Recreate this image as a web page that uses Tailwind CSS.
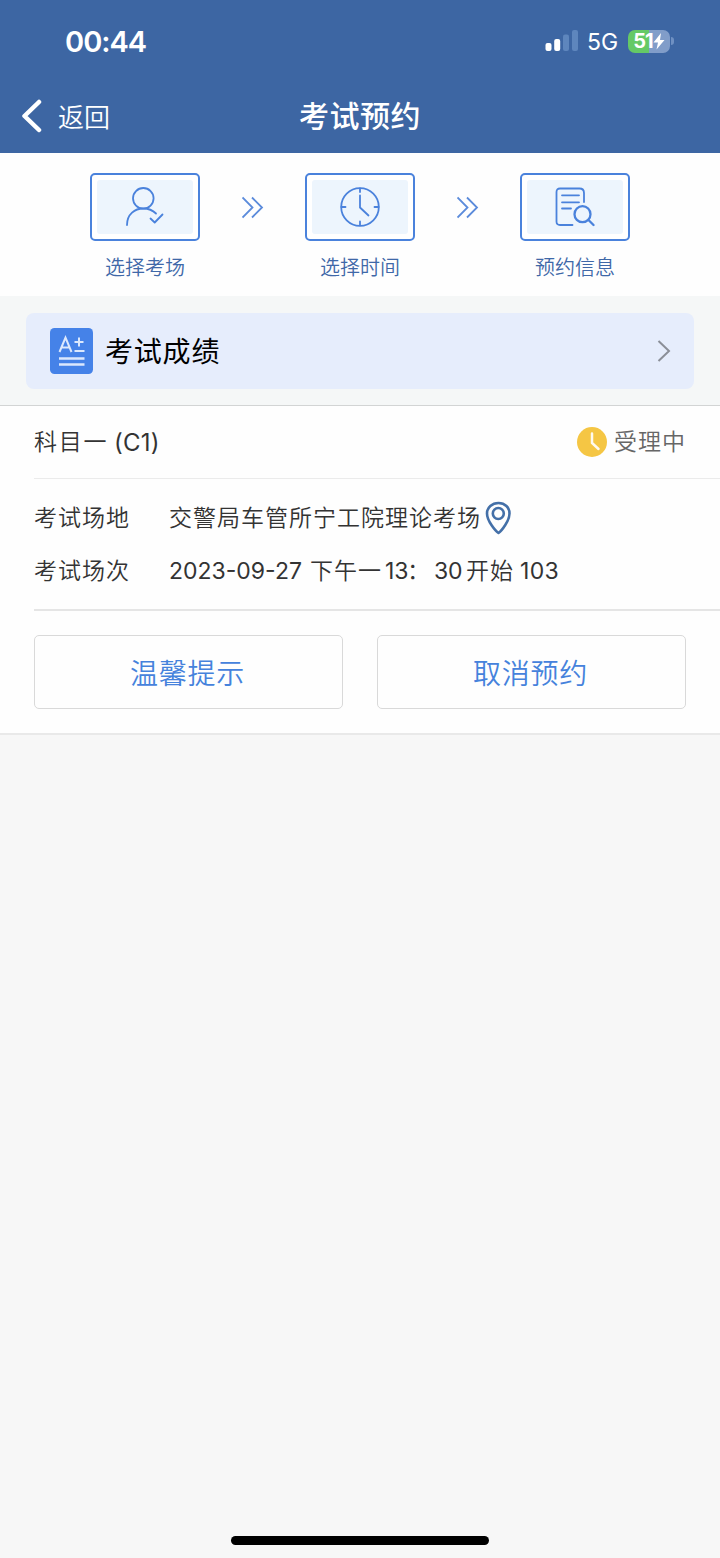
<!DOCTYPE html>
<html lang="zh-CN">

<head>
    <meta charset="UTF-8">
    <meta name="viewport" content="width=device-width, initial-scale=1.0">
    <script src="https://cdn.jsdelivr.net/npm/@tailwindcss/browser@4"></script>
    <title>考试预约</title>
</head>

<body class="bg-[#f7f7f7]">
    <div class="flex flex-col w-[720px] h-[1558px] overflow-hidden bg-[#f7f7f7] text-[#333] font-[350] font-['Inter','Noto_Sans_CJK_SC',sans-serif]">

        <!-- Header -->
        <header class="h-[153px] shrink-0 bg-[#3d66a3] text-white">
            <div class="flex items-center justify-between h-[82px] pl-[65px] pr-[46px]">
                <div class="text-[29px] leading-none font-semibold tracking-[-1px]">00:44</div>
                <div class="flex items-center">
                    <svg class="w-[34px] h-[22px]" viewBox="0 0 34 22">
                        <rect x="0.5" y="13" width="6" height="8" rx="2" fill="#fff" />
                        <rect x="9.2" y="9" width="6" height="12" rx="2" fill="#fff" />
                        <rect x="18" y="4.500" width="6" height="16.500" rx="2" fill="#5e86bd" />
                        <rect x="27" y="0" width="6" height="21" rx="2" fill="#5e86bd" />
                    </svg>
                    <div class="ml-[8px] w-[41px] pt-[2px] text-[23px] leading-none font-normal">5G</div>
                    <div class="flex items-center justify-center w-[42px] h-[23px] rounded-[7px] bg-linear-to-r from-[#65c966] from-51% to-[#819dc9] to-51%">
                        <span class="text-[20px] leading-none font-bold tracking-[-1px]">51</span>
                        <svg class="w-[12px] h-[17px]" viewBox="0 0 12 17">
                            <path d="M8 0 L0.500 9.500 H5 L3.500 16.500 L11.500 7 H7 Z" fill="#fff" />
                        </svg>
                    </div>
                    <div class="ml-[1px] w-[3px] h-[8px] rounded-r-full bg-[#6f90c2]"></div>
                </div>
            </div>
            <div class="grid grid-cols-3 items-center h-[68px]">
                <div class="flex items-center pl-[21px]">
                    <svg class="w-[22px] h-[34px]" viewBox="0 0 22 34" fill="none" stroke="#fff" stroke-width="4.500" stroke-linecap="round" stroke-linejoin="round">
                        <path d="M18 3 L3.500 17 L18 31" />
                    </svg>
                    <span class="ml-[15px] pt-[3px] text-[26px] leading-none">返回</span>
                </div>
                <h1 class="text-center text-[30px] leading-none font-medium tracking-[0.500px]">考试预约</h1>
            </div>
        </header>

        <!-- Steps -->
        <section class="flex justify-between h-[143px] shrink-0 pt-[20px] px-[90px] bg-[#fefefe] text-[#3f68a8]">
            <div class="flex flex-col items-center w-[110px]">
                <div class="w-full h-[68px] p-[5px] border-2 border-[#4a82dc] rounded-[5px] bg-white">
                    <div class="flex items-center justify-center h-full rounded-[3px] bg-[#edf5fd]">
                        <svg class="w-[40px] h-[40px]" viewBox="0 0 40 40" fill="none" stroke="#4a82dc" stroke-width="1.8" stroke-linecap="round" stroke-linejoin="round">
                            <circle cx="18.300" cy="11.300" r="10.300" />
                            <path d="M2 38 C2 27 10 21.500 18.300 21.500 C24 21.500 28 23.500 31 26.500" />
                            <path d="M25.500 31.500 L29.700 35.500 L37.500 27.500" />
                        </svg>
                    </div>
                </div>
                <div class="mt-[16px] text-[20px] leading-[22px] whitespace-nowrap">选择考场</div>
            </div>
            <svg class="mt-[23px] w-[22px] h-[23px]" viewBox="0 0 22 23" fill="none" stroke="#5b8bdb" stroke-width="1.8">
                <path d="M0.500 1.500 L10.500 11.500 L0.500 21.500 M10 1.500 L20 11.500 L10 21.500" />
            </svg>
            <div class="flex flex-col items-center w-[110px]">
                <div class="w-full h-[68px] p-[5px] border-2 border-[#4a82dc] rounded-[5px] bg-white">
                    <div class="flex items-center justify-center h-full rounded-[3px] bg-[#edf5fd]">
                        <svg class="w-[40px] h-[40px]" viewBox="0 0 40 40" fill="none" stroke="#4a82dc" stroke-width="1.800" stroke-linecap="round">
                            <circle cx="20" cy="20" r="18.800" />
                            <path d="M20 8.500 V20.500 L28.500 28.500" />
                            <path d="M20 1.500 V5 M20 34.500 V38 M1.500 20 H5.500 M34.500 20 H38.500" />
                        </svg>
                    </div>
                </div>
                <div class="mt-[16px] text-[20px] leading-[22px] whitespace-nowrap">选择时间</div>
            </div>
            <svg class="mt-[23px] w-[22px] h-[23px]" viewBox="0 0 22 23" fill="none" stroke="#5b8bdb" stroke-width="1.8">
                <path d="M0.500 1.500 L10.500 11.500 L0.500 21.500 M10 1.500 L20 11.500 L10 21.500" />
            </svg>
            <div class="flex flex-col items-center w-[110px]">
                <div class="w-full h-[68px] p-[5px] border-2 border-[#4a82dc] rounded-[5px] bg-white">
                    <div class="flex items-center justify-center h-full rounded-[3px] bg-[#edf5fd]">
                        <svg class="w-[40px] h-[40px]" viewBox="0 0 40 40" fill="none" stroke="#4a82dc" stroke-width="1.800" stroke-linecap="round">
                            <path d="M17.500 38 H5 Q1.500 38 1.500 34.500 V5 Q1.500 1.500 5 1.500 H24.500 Q29 1.500 29 6 V15" />
                            <path d="M7 8.300 H24 M7 15.300 H24 M7 21.500 H16" />
                            <circle cx="27.500" cy="27.200" r="8" stroke-width="2.300" />
                            <path d="M33.500 33 L38.500 38" stroke-width="2.300" />
                        </svg>
                    </div>
                </div>
                <div class="mt-[16px] text-[20px] leading-[22px] whitespace-nowrap">预约信息</div>
            </div>
        </section>

        <!-- Score entry -->
        <section class="h-[109px] shrink-0 pt-[17px] px-[26px] bg-[#f5f7f7]">
            <div class="flex items-center h-[76px] pl-[24px] pr-[23px] rounded-[8px] bg-[#e6edfc]">
                <svg class="w-[43px] h-[46px]" viewBox="0 0 43 46">
                    <rect width="43" height="46" rx="4.500" fill="#4582e8" />
                    <g fill="none" stroke="#dbe8fd" stroke-width="2">
                        <path d="M9.500 24 L15.500 9.500 L21.500 24 M11.500 19.500 H19.500" />
                        <path d="M24.500 14 H33.500 M29 9.500 V18.500 M24.500 23 H34.500" />
                        <path d="M9 30.500 H34.500 M9 36.500 H34.500" stroke-width="2.500" />
                    </g>
                </svg>
                <span class="ml-[12px] pt-[1px] text-[28px] leading-none tracking-[0.800px] text-black font-normal">考试成绩</span>
                <svg class="ml-auto w-[14px] h-[22px]" viewBox="0 0 14 22" fill="none" stroke="#8b8f98" stroke-width="2">
                    <path d="M1.500 1 L12 11 L1.500 21" />
                </svg>
            </div>
        </section>

        <!-- Booking card -->
        <section class="h-[330px] shrink-0 border-t border-b-2 border-t-[#d2d4d4] border-b-[#e9e9e9] bg-[#fefefe] text-[23px] leading-none tracking-[1px]">
            <div class="flex items-center justify-between h-[73px] ml-[34px] pr-[34px] border-b border-[#ebebeb]">
                <div class="flex items-center">
                    <span class="pt-[1px] tracking-[1.700px]">科目一</span>
                    <span class="ml-[6px] pt-[1px] text-[24px] font-normal tracking-[0.200px]">(C1)</span>
                </div>
                <div class="flex items-center text-[#666]">
                    <svg class="w-[30px] h-[30px]" viewBox="0 0 30 30">
                        <circle cx="15" cy="15" r="15" fill="#f5c644" />
                        <path d="M15 6.500 V16 L21.500 22" fill="none" stroke="#fffaf0" stroke-width="2.500" stroke-linecap="round" />
                    </svg>
                    <span class="ml-[7px]">受理中</span>
                </div>
            </div>
            <div class="flex flex-col justify-between h-[132px] ml-[34px] pt-[22px] pb-[21px] border-b-2 border-[#e5e5e5]">
                <div class="flex items-center h-[34px]">
                    <span class="w-[135px]">考试场地</span>
                    <span>交警局车管所宁工院理论考场</span>
                    <svg class="ml-[4px] w-[26px] h-[34px]" viewBox="0 0 26 34" fill="none" stroke="#4470a8" stroke-width="2.600" stroke-linejoin="round">
                        <path d="M13.500 32 C10.500 30 2 20 2 12.500 C2 6.500 7 2 13.500 2 C20 2 24.500 6.500 24.500 12.500 C24.500 20 16.500 30 13.500 32 Z" />
                        <circle cx="13.300" cy="12.500" r="5.500" />
                    </svg>
                </div>
                <div class="flex items-center h-[34px]">
                    <span class="w-[135px]">考试场次</span>
                    <span class="w-[141px] font-normal tracking-[0px]">2023-09-27</span>
                    <span class="w-[75px]">下午一</span>
                    <span class="w-[22px] font-normal tracking-[0px]">13</span>
                    <span class="w-[27px]">：</span>
                    <span class="w-[32px] font-normal tracking-[-0.300px]">30</span>
                    <span class="w-[54px]">开始</span>
                    <span class="font-normal tracking-[0.300px]">103</span>
                </div>
            </div>
            <div class="flex gap-[34px] px-[34px] pt-[24px] text-[28px] text-[#4582dc]">
                <button class="w-[309px] h-[74px] pt-[3px] pr-[2px] border-[1.500px] border-[#d9d9d9] rounded-[5px] leading-none tracking-[0.800px]">温馨提示</button>
                <button class="w-[309px] h-[74px] pt-[3px] pr-[2px] border-[1.500px] border-[#d9d9d9] rounded-[5px] leading-none tracking-[0.800px]">取消预约</button>
            </div>
        </section>

        <!-- Home indicator -->
        <div class="mt-auto mb-[13px] mx-auto w-[258px] h-[9px] rounded-full bg-black"></div>
    </div>
</body>

</html>
